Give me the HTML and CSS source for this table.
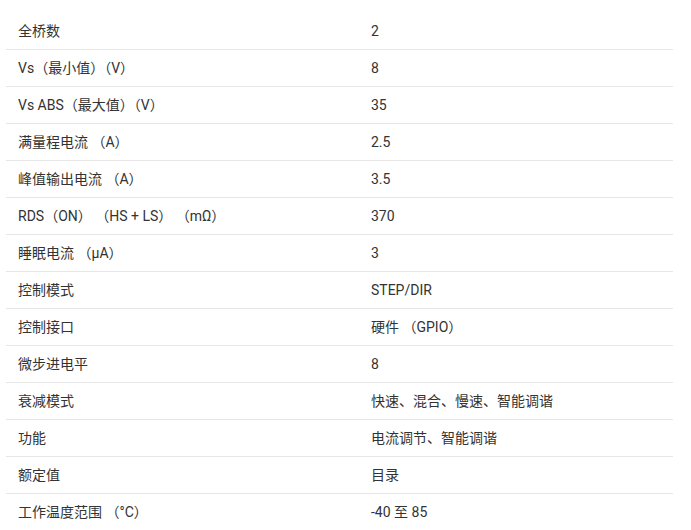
FILE: index.html
```html
<!DOCTYPE html>
<html lang="zh-CN">
<head>
<meta charset="utf-8">
<link rel="stylesheet" href="styles.css">
</head>
<body>
<table class="spec">
  <tbody>
    <tr><td>全桥数</td><td>2</td></tr>
    <tr><td>Vs（最小值）（V）</td><td>8</td></tr>
    <tr><td>Vs ABS（最大值）（V）</td><td>35</td></tr>
    <tr><td>满量程电流 （A）</td><td>2.5</td></tr>
    <tr><td>峰值输出电流 （A）</td><td>3.5</td></tr>
    <tr><td>RDS（ON） （HS + LS） （mΩ）</td><td>370</td></tr>
    <tr><td>睡眠电流 （µA）</td><td>3</td></tr>
    <tr><td>控制模式</td><td>STEP/DIR</td></tr>
    <tr><td>控制接口</td><td>硬件 （GPIO）</td></tr>
    <tr><td>微步进电平</td><td>8</td></tr>
    <tr><td>衰减模式</td><td>快速、混合、慢速、智能调谐</td></tr>
    <tr><td>功能</td><td>电流调节、智能调谐</td></tr>
    <tr><td>额定值</td><td>目录</td></tr>
    <tr><td>工作温度范围 （°C）</td><td>-40 至 85</td></tr>
  </tbody>
</table>
</body>
</html>
```
FILE: styles.css
```css
html, body {
  margin: 0;
  padding: 0;
  background: #ffffff;
}
body {
  padding: 13px 18px 0 6px;
  font-family: Roboto, "Noto Sans CJK SC", sans-serif;
  font-size: 14px;
  color: #333333;
}
.spec {
  width: 667px;
  border-collapse: collapse;
  table-layout: fixed;
}
.spec td {
  height: 36px;
  padding: 0 12px;
  line-height: 20px;
  vertical-align: middle;
  border-bottom: 1px solid #e6e6e6;
  white-space: pre;
}
.spec td:first-child {
  width: 329px;
}
```
